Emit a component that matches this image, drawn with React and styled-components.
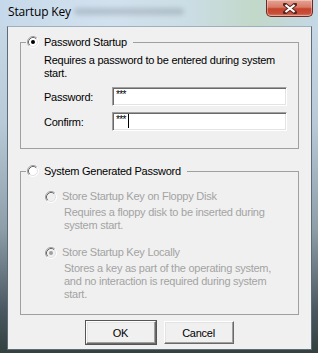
import React from "react";
import styled, { createGlobalStyle } from "styled-components";

const Global = createGlobalStyle`
  html, body { margin: 0; padding: 0; overflow: hidden; background: #3b4750; }
  * { box-sizing: border-box; }
`;

const Window = styled.div`
  position: relative;
  width: 318px;
  height: 353px;
  display: flex;
  flex-direction: column;
  background: linear-gradient(180deg, #cadbe9 0%, #b8cad7 35%, #8d9ea9 65%, #4a5760 88%, #33403f 100%);
  font-family: "Liberation Sans", Arial, sans-serif;
  letter-spacing: -0.25px;
  overflow: hidden;
`;

const TitleBar = styled.div`
  position: relative;
  height: 26px;
  display: flex;
  align-items: flex-start;
  justify-content: space-between;
  padding: 0 5px 0 8px;
  background: linear-gradient(90deg, #c6d9ea 0%, #d2e1ee 35%, #cbdde4 60%, #c2d8c9 80%, #c4d8e6 100%);
`;

const Smudge = styled.div`
  position: absolute;
  left: 74px;
  top: 8px;
  width: 110px;
  height: 7px;
  border-radius: 4px;
  background: #8c9aa6;
  opacity: 0.45;
  filter: blur(2.5px);
`;

const Title = styled.div`
  position: relative;
  margin-top: 4px;
  font-family: "Open Sans", "Noto Sans", sans-serif;
  font-size: 12px;
  line-height: 16px;
  letter-spacing: -0.15px;
  color: #000;
`;

const CloseButton = styled.div`
  position: relative;
  width: 47px;
  height: 17px;
  display: flex;
  align-items: center;
  justify-content: center;
  border: 1px solid #6e2a22;
  border-top: none;
  border-radius: 0 0 5px 5px;
  background: linear-gradient(180deg, #e6a595 0%, #d77a66 45%, #c4432f 55%, #c9503a 85%, #d9826d 100%);
  box-shadow: inset 0 0 0 1px rgba(255, 255, 255, 0.35);
`;

const Client = styled.div`
  height: 324px;
  margin: 0 6px 0 7px;
  background: #f0f0f0;
  border: 1px solid #5d6d78;
  border-top-color: #9fb0bd;
  display: flex;
  flex-direction: column;
`;

const GroupBox = styled.fieldset`
  margin: ${(p) => p.$top}px 12px 0 12px;
  padding: ${(p) => p.$padTop}px 11px ${(p) => p.$padBottom}px 5px;
  border: 1px solid #a0a0a0;
  min-width: 0;
`;

const Legend = styled.legend`
  padding: 0 6px 0 1px;
  display: flex;
  align-items: center;
  height: 14px;
  font-size: 11px;
  color: #000;
`;

const LegendText = styled.span`
  margin-left: 5px;
  line-height: 13px;
`;

const Text = styled.div`
  margin: ${(p) => p.$mt || 0}px 0 0 ${(p) => p.$ml}px;
  font-size: 11px;
  line-height: 13px;
  color: ${(p) => (p.$disabled ? "#a3a3a3" : "#000")};
  white-space: nowrap;
`;

const FieldRow = styled.div`
  display: flex;
  align-items: center;
  margin: ${(p) => p.$mt}px 0 0 18px;
`;

const FieldLabel = styled.div`
  width: 68px;
  font-size: 11px;
  line-height: 13px;
  color: #000;
  padding-top: 1px;
`;

const Field = styled.div`
  flex: 1;
  height: 19px;
  background: #fff;
  border: 1px solid;
  border-color: #a0a0a0 #fff #fff #a0a0a0;
  box-shadow: inset 1px 1px 0 #696969, inset -1px -1px 0 #e3e3e3;
  padding: 2px 0 0 3px;
  display: flex;
  align-items: flex-start;
  font-family: "Liberation Sans", Arial, sans-serif;
  font-size: 10px;
  line-height: 10px;
  letter-spacing: -0.6px;
  color: #000;
`;

const Caret = styled.span`
  display: inline-block;
  width: 1px;
  height: 14px;
  margin: -1px 0 0 2px;
  background: #000;
`;

const OptionRow = styled.div`
  display: flex;
  align-items: center;
  height: 13px;
  margin: ${(p) => p.$mt}px 0 0 19px;
`;

const OptionText = styled.span`
  margin-left: 5px;
  font-size: 11px;
  line-height: 13px;
  color: #a3a3a3;
  white-space: nowrap;
`;

const ButtonRow = styled.div`
  display: flex;
  justify-content: center;
  gap: 8px;
  margin-top: 6px;
`;

const Button = styled.div`
  width: 70px;
  height: 23px;
  display: flex;
  align-items: center;
  justify-content: center;
  background: #f0f0f0;
  border: 1px solid;
  border-color: #fff #696969 #696969 #fff;
  box-shadow: inset -1px -1px 0 #a0a0a0, inset 1px 1px 0 #e3e3e3
    ${(p) => (p.$default ? ", 0 0 0 1px #555" : "")};
  font-size: 11px;
  color: #000;
`;

function Radio({ checked, disabled }) {
  const face = disabled ? "#f0f0f0" : "#fff";
  const dot = disabled ? "#a0a0a0" : "#000";
  return (
    <svg width="12" height="12" viewBox="0 0 12 12" style={{ flex: "none" }}>
      <circle cx="6" cy="6" r="5" fill={face} />
      <path d="M2.11 9.89 A5.5 5.5 0 0 1 9.89 2.11" fill="none" stroke="#a0a0a0" strokeWidth="1" />
      <path d="M9.89 2.11 A5.5 5.5 0 0 1 2.11 9.89" fill="none" stroke="#fff" strokeWidth="1" />
      <path d="M2.82 9.18 A4.5 4.5 0 0 1 9.18 2.82" fill="none" stroke="#696969" strokeWidth="1" />
      <path d="M9.18 2.82 A4.5 4.5 0 0 1 2.82 9.18" fill="none" stroke="#e3e3e3" strokeWidth="1" />
      {checked && <circle cx="6" cy="6" r="2" fill={dot} />}
    </svg>
  );
}

function CloseGlyph() {
  return (
    <svg width="14" height="11" viewBox="0 0 14 11">
      <path
        d="M2 1.5 L12 9.5 M12 1.5 L2 9.5"
        stroke="#5a2620"
        strokeWidth="4"
        strokeLinecap="square"
        fill="none"
      />
      <path
        d="M2.5 2 L11.5 9 M11.5 2 L2.5 9"
        stroke="#fff"
        strokeWidth="2.2"
        strokeLinecap="butt"
        fill="none"
      />
    </svg>
  );
}

export default function App() {
  return (
    <>
      <Global />
      <Window>
        <TitleBar>
          <Smudge />
          <Title>Startup Key</Title>
          <CloseButton>
            <CloseGlyph />
          </CloseButton>
        </TitleBar>
        <Client>
          <GroupBox $top={8} $padTop={5} $padBottom={17}>
            <Legend>
              <Radio checked />
              <LegendText>Password Startup</LegendText>
            </Legend>
            <Text $ml={18}>
              Requires a password to be entered during system
              <br />
              start.
            </Text>
            <FieldRow $mt={7}>
              <FieldLabel>Password:</FieldLabel>
              <Field>***</Field>
            </FieldRow>
            <FieldRow $mt={6}>
              <FieldLabel>Confirm:</FieldLabel>
              <Field>
                ***
                <Caret />
              </Field>
            </FieldRow>
          </GroupBox>

          <GroupBox $top={15} $padTop={12} $padBottom={13}>
            <Legend>
              <Radio />
              <LegendText>System Generated Password</LegendText>
            </Legend>
            <OptionRow $mt={0}>
              <Radio disabled />
              <OptionText>Store Startup Key on Floppy Disk</OptionText>
            </OptionRow>
            <Text $ml={38} $mt={3} $disabled>
              Requires a floppy disk to be inserted during
              <br />
              system start.
            </Text>
            <OptionRow $mt={14}>
              <Radio checked disabled />
              <OptionText>Store Startup Key Locally</OptionText>
            </OptionRow>
            <Text $ml={38} $mt={3} $disabled>
              Stores a key as part of the operating system,
              <br />
              and no interaction is required during system
              <br />
              start.
            </Text>
          </GroupBox>

          <ButtonRow>
            <Button $default>OK</Button>
            <Button>Cancel</Button>
          </ButtonRow>
        </Client>
      </Window>
    </>
  );
}
